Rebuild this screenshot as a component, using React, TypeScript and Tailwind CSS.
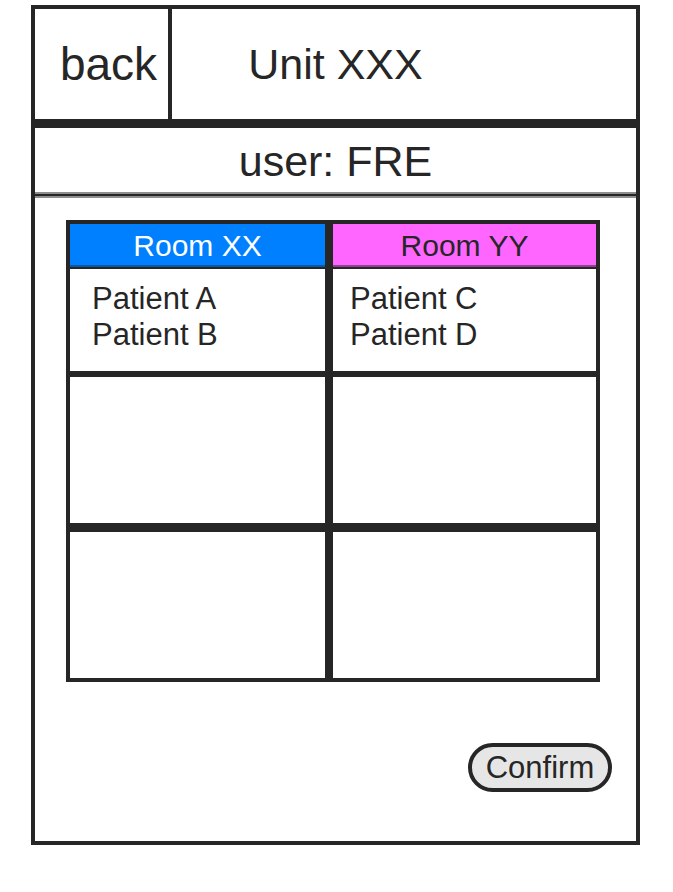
const emptyRows = [
  { id: "middle", border: "border-b-9 h-[155px]" },
  { id: "last", border: "h-[146px]" },
];

function Header() {
  return (
    <header>
      <div className="flex h-[119px] border-b-9 border-[#262626]">
        <button
          type="button"
          className="w-[137px] shrink-0 border-r-4 border-[#262626] pl-3.5 text-center text-[46px] leading-none"
        >
          back
        </button>
        <h1 className="flex flex-1 items-center justify-center pr-[137px] text-[43px] leading-none">
          Unit XXX
        </h1>
      </div>
      <p className="flex h-16 items-center justify-center pt-0.5 text-[43px] leading-none">user: FRE</p>
      <hr className="h-[6px] border-y-2 border-[#8e8e8e] bg-[#262626]" />
    </header>
  );
}

function RoomTable() {
  return (
    <table className="w-full table-fixed border-separate border-spacing-0 border-4 border-[#262626]">
      <thead>
        <tr className="h-[45px] text-[30px] leading-none">
          <th
            scope="col"
            className="border-r-8 border-b-2 border-[#262626] bg-[#0080ff] p-0 font-normal text-white shadow-[inset_0_-2px_0_#0a59a6]"
          >
            Room XX
          </th>
          <th
            scope="col"
            className="border-b-2 border-[#262626] bg-[#ff66ff] p-0 font-normal shadow-[inset_0_-2px_0_#8f4290]"
          >
            Room YY
          </th>
        </tr>
      </thead>
      <tbody>
        <tr className="h-[108px] align-top text-[31px] leading-9">
          <td className="border-r-8 border-b-6 border-[#262626] pt-3 pl-[22px]">
            <ul>
              <li>Patient A</li>
              <li>Patient B</li>
            </ul>
          </td>
          <td className="border-b-6 border-[#262626] pt-3 pl-[17px]">
            <ul>
              <li>Patient C</li>
              <li>Patient D</li>
            </ul>
          </td>
        </tr>
        {emptyRows.map((row) => (
          <tr key={row.id}>
            <td className={`border-r-8 border-[#262626] p-0 ${row.border}`} />
            <td className={`border-[#262626] p-0 ${row.border}`} />
          </tr>
        ))}
      </tbody>
    </table>
  );
}

export default function App() {
  return (
    <div className="bg-white pt-[5px] pr-[33px] pb-[46px] pl-[31px] font-['Liberation_Sans',Arial,sans-serif] text-[#262626]">
      <div className="border-4 border-[#262626]">
        <Header />
        <main className="pt-[22px] pb-[49px]">
          <div className="pr-9 pl-[31px]">
            <RoomTable />
          </div>
          <div className="mt-[61px] flex justify-end pr-6">
            <button
              type="button"
              className="h-[49px] w-36 rounded-full border-4 border-[#262626] bg-[#e6e6e6] text-[31px] leading-none"
            >
              Confirm
            </button>
          </div>
        </main>
      </div>
    </div>
  );
}
